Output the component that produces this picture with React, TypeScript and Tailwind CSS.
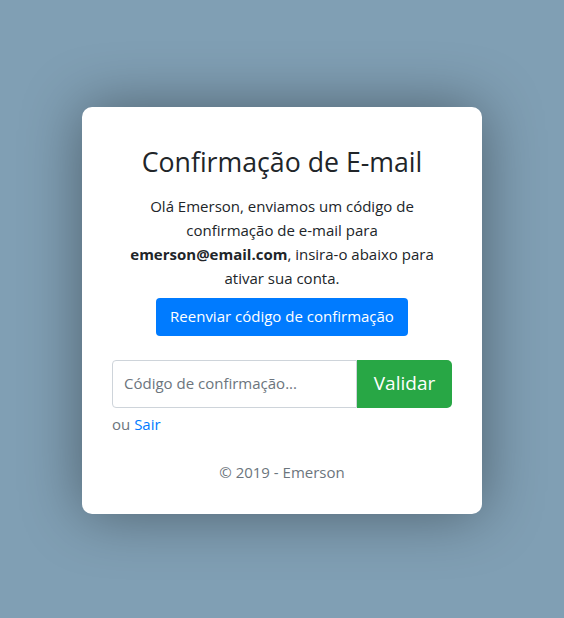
import React from "react";

export default function App() {
  return (
    <div
      className="min-h-screen w-full flex items-center justify-center bg-[#809fb4]"
      style={{ fontFamily: '"Open Sans", "Noto Sans", sans-serif' }}
    >
      <div className="mt-[2px] w-[400px] bg-white rounded-[10px] shadow-[0_0_60px_rgba(0,0,0,0.4)] px-[30px] pt-[38px] pb-[30px] flex flex-col items-center text-[#212529]">
        <h1 className="text-[26.7px] leading-[34px] font-normal text-center mb-[15px]">
          Confirmação de E-mail
        </h1>
        <p className="text-[15px] leading-[24px] text-center">
          Olá Emerson, enviamos um código de
          <br />
          confirmação de e-mail para
          <br />
          <b className="font-bold">emerson@email.com</b>, insira-o abaixo para
          <br />
          ativar sua conta.
        </p>
        <button className="mt-[8px] h-[38px] px-[14px] rounded-[4px] bg-[#007bff] text-white text-[15px]">
          Reenviar código de confirmação
        </button>
        <div className="mt-[24px] w-full flex h-[48px]">
          <input
            className="flex-1 min-w-0 border border-[#ced4da] rounded-l-[4px] px-[11px] text-[15px] outline-none placeholder:text-[#6c757d]"
            placeholder="Código de confirmação..."
          />
          <button className="w-[95px] bg-[#28a745] text-white text-[19px] rounded-r-[5px]">
            Validar
          </button>
        </div>
        <div className="w-full mt-[4px] text-[15px] leading-[24px] text-[#6c757d]">
          ou <a className="text-[#007bff]" href="#">Sair</a>
        </div>
        <div className="mt-[24px] text-[15px] leading-[24px] text-[#6c757d]">
          © 2019 - Emerson
        </div>
      </div>
    </div>
  );
}
